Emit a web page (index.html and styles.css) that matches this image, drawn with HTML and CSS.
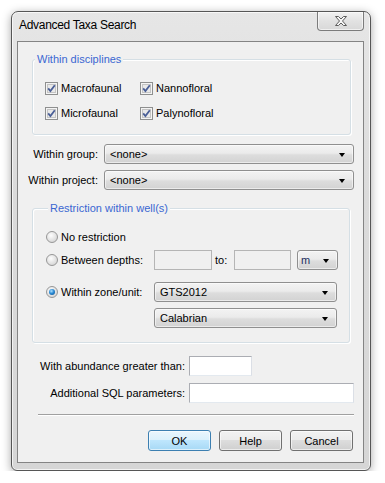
FILE: index.html
```html
<!DOCTYPE html>
<html>
	<head>
		<meta charset="utf-8">
		<title>Advanced Taxa Search</title>
		<link rel="stylesheet" href="styles.css">
	</head>
	<body>
		<div class="window">
			<div class="titlebar">
				<span class="title">Advanced Taxa Search</span>
				<div class="close">
					<svg width="14" height="12" viewBox="0 0 14 12">
						<path d="M1.5 1.5 H4.5 L7 4 L9.5 1.5 H12.5 L8.5 6 L12.5 10.5 H9.5 L7 8 L4.5 10.5 H1.5 L5.5 6 Z" fill="#f6f6f6" stroke="#5c5c5c" stroke-width="1" stroke-linejoin="round"/>
					</svg>
				</div>
			</div>

			<div class="client">
				<!--disciplines-->
				<div class="group group-disc">
					<div class="group-title">Within disciplines</div>
					<div class="checks">
						<label class="check"><svg class="box" width="13" height="13" viewBox="0 0 13 13"><rect x="0.5" y="0.5" width="12" height="12" fill="#f4f4f4" stroke="#8e8f8f"/><rect x="2.5" y="2.5" width="8" height="8" fill="#e9e9e9" stroke="#c4c4c4"/><path d="M3.2 6.4 L5.4 9 L9.8 3.2" fill="none" stroke="#4a5f97" stroke-width="1.8"/></svg>Macrofaunal</label>
						<label class="check"><svg class="box" width="13" height="13" viewBox="0 0 13 13"><rect x="0.5" y="0.5" width="12" height="12" fill="#f4f4f4" stroke="#8e8f8f"/><rect x="2.5" y="2.5" width="8" height="8" fill="#e9e9e9" stroke="#c4c4c4"/><path d="M3.2 6.4 L5.4 9 L9.8 3.2" fill="none" stroke="#4a5f97" stroke-width="1.8"/></svg>Nannofloral</label>
						<label class="check"><svg class="box" width="13" height="13" viewBox="0 0 13 13"><rect x="0.5" y="0.5" width="12" height="12" fill="#f4f4f4" stroke="#8e8f8f"/><rect x="2.5" y="2.5" width="8" height="8" fill="#e9e9e9" stroke="#c4c4c4"/><path d="M3.2 6.4 L5.4 9 L9.8 3.2" fill="none" stroke="#4a5f97" stroke-width="1.8"/></svg>Microfaunal</label>
						<label class="check"><svg class="box" width="13" height="13" viewBox="0 0 13 13"><rect x="0.5" y="0.5" width="12" height="12" fill="#f4f4f4" stroke="#8e8f8f"/><rect x="2.5" y="2.5" width="8" height="8" fill="#e9e9e9" stroke="#c4c4c4"/><path d="M3.2 6.4 L5.4 9 L9.8 3.2" fill="none" stroke="#4a5f97" stroke-width="1.8"/></svg>Palynofloral</label>
					</div>
				</div>

				<!--group / project-->
				<div class="fields">
					<div class="field">
						<span class="field-label">Within group:</span>
						<div class="combo combo-long"><span>&lt;none&gt;</span><i class="arrow"></i></div>
					</div>
					<div class="field">
						<span class="field-label">Within project:</span>
						<div class="combo combo-long"><span>&lt;none&gt;</span><i class="arrow"></i></div>
					</div>
				</div>

				<!--well restriction-->
				<div class="group group-well">
					<div class="group-title">Restriction within well(s)</div>
					<div class="well-row row-none">
						<div class="opt"><span class="radio"></span>No restriction</div>
					</div>
					<div class="well-row row-depth">
						<div class="opt"><span class="radio"></span>Between depths:</div>
						<div class="text text-off depth"></div>
						<span class="to">to:</span>
						<div class="text text-off depth2"></div>
						<div class="combo combo-unit"><span>m</span><i class="arrow"></i></div>
					</div>
					<div class="well-row row-zone">
						<div class="opt"><span class="radio on"></span>Within zone/unit:</div>
						<div class="combo combo-zone"><span>GTS2012</span><i class="arrow"></i></div>
					</div>
					<div class="well-row row-sub">
						<div class="combo combo-zone"><span>Calabrian</span><i class="arrow"></i></div>
					</div>
				</div>

				<!--other-->
				<div class="extra">
					<div class="extra-row">
						<span class="extra-label">With abundance greater than:</span>
						<div class="text abund"></div>
					</div>
					<div class="extra-row">
						<span class="extra-label">Additional SQL parameters:</span>
						<div class="text sql"></div>
					</div>
				</div>

				<div class="separator"></div>

				<div class="buttons">
					<div class="btn btn-default">OK</div>
					<div class="btn">Help</div>
					<div class="btn">Cancel</div>
				</div>
			</div>
		</div>
	</body>
</html>
```

FILE: styles.css
```css
body,html{
	margin: 0;
}
body{
	background: #fff;
	font: 11px "Liberation Sans", Arial, sans-serif;
	color: #000;
}
.window{
	box-sizing: border-box;
	width: 360px;
	height: 460px;
	margin: 11px 0 0 11px;
	padding: 0 6px 7px 5px;
	display: flex;
	flex-direction: column;
	border: 1px solid #565656;
	border-radius: 7px 7px 6px 6px;
	background: linear-gradient(#e6e6e6, #dbdbdb 40%, #d6d6d6);
	box-shadow: 0 2px 10px rgba(0,0,0,0.35), inset 0 0 0 1px rgba(255,255,255,0.7);
}
.titlebar{
	height: 29px;
	display: flex;
	justify-content: space-between;
	align-items: flex-start;
	flex-shrink: 0;
}
.title{
	margin: 6px 0 0 2px;
	font-size: 12px;
	line-height: 14px;
	letter-spacing: -0.3px;
	color: #000;
}
.close{
	box-sizing: border-box;
	width: 47px;
	height: 19px;
	display: flex;
	align-items: center;
	justify-content: center;
	border: 1px solid #7c7c7c;
	border-top: none;
	border-radius: 0 0 4px 4px;
	background: linear-gradient(#f2f2f2, #e2e2e2 50%, #d8d8d8);
	box-shadow: inset 0 0 0 1px rgba(255,255,255,0.6);
}
.client{
	flex: 1;
	border: 1px solid #848484;
	background: #f0f0f0;
	display: flex;
	flex-direction: column;
}

/* group boxes */
.group{
	border: 1px solid #d5dfe5;
	border-radius: 3px;
	box-shadow: inset 1px 1px 0 #fff, 1px 1px 0 #fff;
}
.group-title{
	width: fit-content;
	margin: -7px 0 0 2px;
	padding: 0 2px;
	line-height: 13px;
	background: #f0f0f0;
	color: #3a67d2;
}
.group-disc{
	margin: 17px 12px 0 14px;
}
.checks{
	display: grid;
	grid-template-columns: 95px auto;
	grid-auto-rows: 20px;
	row-gap: 5px;
	padding: 12px 0 11px 12px;
}
.check{
	display: flex;
	align-items: center;
}
.check .box{
	margin-right: 3px;
}

/* group & project */
.fields{
	margin: 9px 9px 0 0;
	display: flex;
	flex-direction: column;
	gap: 6px;
}
.field{
	display: flex;
	align-items: center;
	height: 20px;
}
.field-label{
	width: 80px;
	text-align: right;
	margin-right: 6px;
}
.combo{
	box-sizing: border-box;
	height: 20px;
	display: flex;
	align-items: center;
	justify-content: space-between;
	padding: 0 8px 0 5px;
	border: 1px solid #8f8f8f;
	border-radius: 3px;
	background: linear-gradient(#f3f3f3, #ebebeb 45%, #dddddd 55%, #d2d2d2);
	box-shadow: inset 0 0 0 1px rgba(255,255,255,0.55);
}
.combo-long{
	flex: 1;
}
.arrow{
	width: 0;
	height: 0;
	border-left: 3.5px solid transparent;
	border-right: 3.5px solid transparent;
	border-top: 4px solid #000;
	margin-top: 2px;
}

/* well group */
.group-well{
	margin: 18px 13px 0 14px;
	padding: 0 0 14px 13px;
}
.well-row{
	display: flex;
	align-items: center;
	height: 20px;
}
.row-none{
	margin-top: 12px;
}
.row-depth{
	margin-top: 3px;
}
.row-zone{
	margin-top: 12px;
}
.row-sub{
	margin-top: 6px;
	padding-left: 108px;
}
.opt{
	width: 108px;
	display: flex;
	align-items: center;
}
.radio{
	box-sizing: border-box;
	width: 12px;
	height: 12px;
	margin-right: 3px;
	border-radius: 50%;
	border: 1px solid #979797;
	background: radial-gradient(circle at 40% 35%, #fdfdfd, #e2e2e2 55%, #cbcbcb);
	display: flex;
	align-items: center;
	justify-content: center;
}
.radio.on::after{
	content: "";
	width: 6px;
	height: 6px;
	border-radius: 50%;
	background: radial-gradient(circle at 40% 35%, #aee0ff, #2a8ad4 45%, #0c4c8a);
}
.text{
	box-sizing: border-box;
	height: 20px;
	background: #fff;
	border: 1px solid #abadb3;
	border-right-color: #dbdfe6;
	border-bottom-color: #e3e9ef;
}
.text-off{
	background: #f0f0f0;
	border-color: #b5b5b5;
}
.depth{
	width: 58px;
}
.to{
	width: 19px;
	margin-left: 3px;
}
.depth2{
	width: 57px;
}
.combo-unit{
	width: 41px;
	margin-left: 6px;
	padding-left: 3px;
	color: #1c2f5e;
}
.combo-zone{
	width: 183px;
}

/* extra */
.extra{
	margin-top: 13px;
	display: flex;
	flex-direction: column;
	gap: 7px;
}
.extra-row{
	display: flex;
	align-items: center;
	height: 20px;
}
.extra-label{
	width: 167px;
	text-align: right;
	margin-right: 4px;
}
.abund{
	width: 63px;
}
.sql{
	width: 165px;
}

.separator{
	margin: 11px 9px 0 20px;
	border-top: 1px solid #a0a0a0;
	border-bottom: 1px solid #fff;
}

.buttons{
	margin: 14px 10px 0 0;
	display: flex;
	justify-content: flex-end;
	gap: 8px;
}
.btn{
	box-sizing: border-box;
	width: 63px;
	height: 21px;
	display: flex;
	align-items: center;
	justify-content: center;
	border: 1px solid #707070;
	border-radius: 3px;
	background: linear-gradient(#f2f2f2, #ebebeb 50%, #dddddd 50%, #cfcfcf);
	box-shadow: inset 0 0 0 1px rgba(255,255,255,0.6);
}
.btn-default{
	border-color: #3c7fb1;
	background: linear-gradient(#eaf6fd, #d9f0fc 50%, #bee6fd 50%, #a7d9f5);
}
```
